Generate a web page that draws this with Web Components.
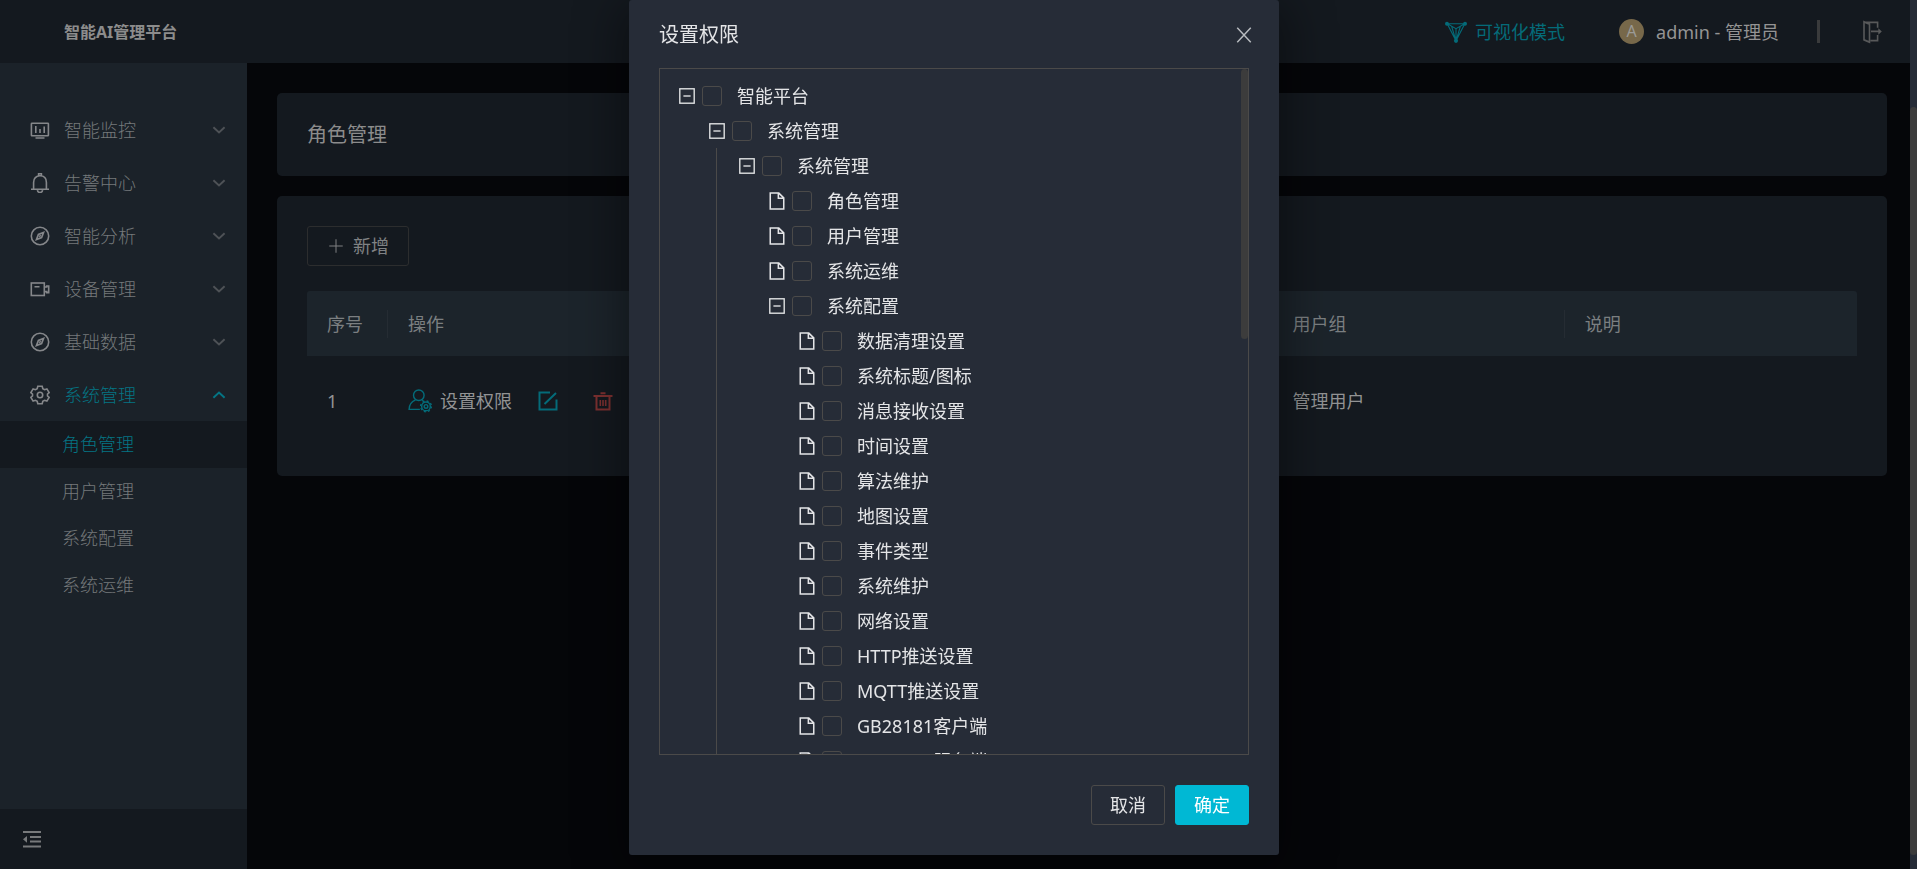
<!DOCTYPE html>
<html lang="zh-CN">
<head>
<meta charset="utf-8">
<title>智能AI管理平台</title>
<style>
    html, body { height: 100%; margin: 0; }
    body {
        background: #050609;
        color: #8a8c8e;
        font: 18px/26px "Noto Sans", "Noto Sans CJK SC", sans-serif;
        overflow: hidden;
    }
</style>
</head>
<body>
<app-shell>
    <app-header slot="header" name="智能AI管理平台" user="admin - 管理员"></app-header>
    <side-nav slot="nav">
        <nav-item icon="monitor">智能监控</nav-item>
        <nav-item icon="bell">告警中心</nav-item>
        <nav-item icon="compass">智能分析</nav-item>
        <nav-item icon="camera">设备管理</nav-item>
        <nav-item icon="compass">基础数据</nav-item>
        <nav-item icon="gear" open>系统管理
            <sub-item slot="sub" active>角色管理</sub-item>
            <sub-item slot="sub">用户管理</sub-item>
            <sub-item slot="sub">系统配置</sub-item>
            <sub-item slot="sub">系统运维</sub-item>
        </nav-item>
    </side-nav>
    <page-card><page-title>角色管理</page-title></page-card>
    <page-card>
        <ui-button icon="plus">新增</ui-button>
        <role-table></role-table>
    </page-card>
</app-shell>
<perm-modal heading="设置权限">
    <perm-tree></perm-tree>
    <ui-button slot="footer" variant="dialog">取消</ui-button>
    <ui-button slot="footer" variant="primary">确定</ui-button>
</perm-modal>

<script>
const ICONS = {
    monitor: '<rect x="1.4" y="3.2" width="17" height="12.6" rx=".6"/><path d="M5.8 6v7M10 9v4M14.2 6.500v6.500M5.500 18h9"/>',
    bell: '<path d="M1 16.200h18M3.600 16V9.500C3.600 5.500 6 2.800 10 2.800s6.400 2.700 6.400 6.700V16M8.600 2.500V.8h2.800v1.700M7.400 17.200c.3 3 4.900 3 5.200 0"/>',
    compass: '<circle cx="10" cy="10" r="8.700"/><path d="M13.600 6.400l-2 5.200-5.200 2 2-5.200z M9.200 10.800l1.600-1.600"/>',
    camera: '<rect x="1.300" y="4" width="13" height="12.500"/><path d="M4.500 7.800h5M14.500 8h2.200v-1h2v6.600h-2v-1h-2.200"/>',
    gear: '<path d="M7.800 1.200h4.400l.6 2.500 1.700 1 2.400-.8 2.200 3.700-1.600 1.400v2l1.600 1.400-2.200 3.700-2.400-.8-1.700 1-.6 2.500H7.800l-.6-2.500-1.700-1-2.400.8L.9 12.400 2.500 11V9L.9 7.600l2.200-3.700 2.400.8 1.700-1z"/><circle cx="10" cy="10" r="2.700"/>',
    down: '<path d="M3 6.500l7 6.500 7-6.500"/>',
    up: '<path d="M3 13.500L10 7l7 6.500"/>',
    fold: '<path d="M1 3h18M8 8h11M8 12.600h11M1 17.500h18" stroke-width="2"/><path d="M1 10.300l4-3.400v6.800z" fill="currentColor" stroke="none"/>',
    visual: '<path d="M2 2.500h16L10 18zM2 2.500l8 4.500 8-4.500M10 7v11M6 4.800L10 18l4-13.200"/><g fill="currentColor" stroke="none"><circle cx="1.800" cy="2.500" r="1.800"/><circle cx="18.200" cy="2.500" r="1.800"/><circle cx="10" cy="18" r="1.900"/></g>',
    logout: '<path d="M8 2h7.600v4.500M15.600 12.500v4.700H8.500M2 1.500l5.500 2v15l-5.500-2zM2 2h7M9 9.500h9"/><path d="M16.300 6.800l3.500 2.700-3.500 2.700z" fill="currentColor" stroke="none"/>',
    plus: '<path d="M10 2.500v15M2.500 10h15"/>',
    rights: '<circle cx="9" cy="5.200" r="4.400"/><path d="M6.300 9C2.800 10.500.9 13.500.9 17h9M11.700 9l1.200.8"/><circle cx="15" cy="14.500" r="1.500"/><circle cx="15" cy="14.500" r="3.600"/><circle cx="15" cy="14.500" r="4.500" stroke-dasharray="1.700 1.830"/>',
    edit: '<path d="M12 1.500H1.500v17h17V8.500M6.500 13L18 2" stroke-width="2"/>',
    trash: '<path d="M.5 5h19M7.500 2.200h5M3.500 5v13.500h13V5" stroke-width="2"/><path d="M7.300 9v6M10 9v6M12.700 9v6"/>',
    close: '<path d="M2.500 2l15 16M17.500 2l-15 16"/>',
    minus: '<rect x="1" y="1" width="18" height="18"/><path d="M5.500 10h9"/>',
    file: '<path d="M2.500 1.200h9.500l5.500 5.300V18.800h-15zM11.500 1.500V7h6"/>'
};

function define(name, html, setup) {
    customElements.define(name, class extends HTMLElement {
        constructor() {
            super();
            this.attachShadow({ mode: 'open' });
        }

        connectedCallback() {
            this.shadowRoot.innerHTML = typeof html === 'function' ? html(this) : html;
            if (setup) setup(this, this.shadowRoot);
        }
    });
}

define('ui-icon', el => `
    <style>
        :host { display: block; width: 20px; height: 20px; flex: none; }
        svg { display: block; width: 100%; height: 100%; fill: none; stroke: currentColor; stroke-width: var(--stroke, 1.6); }
    </style>
    <svg viewBox="0 0 20 20" preserveAspectRatio="none" aria-hidden="true">${ICONS[el.getAttribute('name')]}</svg>
`);

define('app-shell', `
    <style>
        :host { display: grid; grid-template: 63px 1fr / 247px 1fr; height: 100vh; }
        header { grid-column: 1 / 3; background: #14191f; }
        aside { background: #1b2229; }
        main { display: flex; flex-direction: column; gap: 20px; padding: 30px; }
    </style>
    <header><slot name="header"></slot></header>
    <aside><slot name="nav"></slot></aside>
    <main><slot></slot></main>
`);

define('app-header', el => `
    <style>
        :host { display: block; height: 100%; }
        .bar { display: flex; align-items: center; justify-content: space-between; height: 100%; padding: 0 35px 0 64px; }
        h1 { margin: 0; font-size: 16px; font-weight: 700; color: #8c8c8c; }
        .tools, a, .user { display: flex; align-items: center; }
        a { gap: 8px; color: #046b79; text-decoration: none; margin-right: 54px; }
        a ui-icon { width: 22px; height: 22px; --stroke: 1; }
        .user { gap: 12px; color: #949494; }
        .avatar { width: 25px; height: 25px; border-radius: 50%; background: #77684a; color: #9b9a96; font-size: 16px; line-height: 25px; text-align: center; }
        .line { width: 3px; height: 23px; margin: 0 42px 0 38px; background: #3a3b3c; }
        button { border: 0; padding: 0; background: none; color: #58595a; }
        button ui-icon { height: 24px; }
    </style>
    <div class="bar">
        <h1>${el.getAttribute('name')}</h1>
        <div class="tools">
            <a href="#visual"><ui-icon name="visual"></ui-icon>可视化模式</a>
            <div class="user"><span class="avatar">A</span><span>${el.getAttribute('user')}</span></div>
            <span class="line"></span>
            <button aria-label="退出"><ui-icon name="logout"></ui-icon></button>
        </div>
    </div>
`);

define('side-nav', `
    <style>
        :host { display: flex; flex-direction: column; height: 100%; }
        nav { flex: 1; padding-top: 40px; }
        footer { display: flex; align-items: center; height: 60px; padding-left: 22px; background: #14191f; }
        button { border: 0; padding: 0; background: none; color: #77797b; }
    </style>
    <nav><slot></slot></nav>
    <footer><button aria-label="收起菜单"><ui-icon name="fold"></ui-icon></button></footer>
`);

define('nav-item', el => `
    <style>
        :host { display: block; color: #75797b; font-weight: 300; }
        button {
            display: flex; align-items: center; width: 100%; height: 53px; padding: 0 20px 0 30px;
            border: 0; background: none; color: inherit; font: inherit; text-align: left;
        }
        :host([open]) button { color: #047584; }
        .icon { color: #85878a; margin-right: 14px; }
        .text { flex: 1; }
        .arrow { width: 16px; height: 16px; --stroke: 2.4; }
        :host(:not([open])) .arrow { color: #4e5256; }
    </style>
    <button aria-expanded="${el.hasAttribute('open')}">
        <ui-icon class="icon" name="${el.getAttribute('icon')}"></ui-icon>
        <span class="text"><slot></slot></span>
        <ui-icon class="arrow" name="${el.hasAttribute('open') ? 'up' : 'down'}"></ui-icon>
    </button>
    <slot name="sub"></slot>
`);

define('sub-item', `
    <style>
        :host { display: block; }
        a { display: block; padding-left: 62px; line-height: 47px; color: #75797b; text-decoration: none; }
        :host([active]) a { background: #14191f; color: #047584; }
    </style>
    <a href="#"><slot></slot></a>
`);

define('page-card', `
    <style>
        :host { display: block; padding: 30px; border-radius: 5px; background: #14191f; }
    </style>
    <slot></slot>
`);

define('page-title', `
    <style>
        :host { display: block; }
        h2 { margin: 0; font-size: 20px; line-height: 23px; font-weight: 400; color: #8c8c8c; }
    </style>
    <h2><slot></slot></h2>
`);

define('ui-button', el => `
    <style>
        :host { display: block; }
        button {
            display: flex; align-items: center; gap: 8px; height: 40px; padding: 0 19px;
            border: 1px solid #2c2d2e; border-radius: 3px; background: none; color: #808284; font: inherit;
        }
        ui-icon { width: 18px; height: 18px; --stroke: 1.1; }
        :host([variant]) button { padding: 0 18px; border-color: #4b4a49; color: #e4e5e7; }
        :host([variant="primary"]) button { border-color: #00b8d4; background: #00b8d4; color: #fff; }
    </style>
    <button>${el.hasAttribute('icon') ? `<ui-icon name="${el.getAttribute('icon')}"></ui-icon>` : ''}<slot></slot></button>
`);

define('role-table', `
    <style>
        :host { display: block; margin-top: 25px; }
        table { width: 100%; table-layout: fixed; border-collapse: separate; border-spacing: 0; }
        .index { width: 81px; }
        .action { width: 300px; }
        th, td { padding: 0 20px; text-align: left; font-weight: 400; box-sizing: border-box; }
        th { height: 65px; color: #7b7f81; background: #1c242b; }
        th:not(:last-child) { background: linear-gradient(#252c33, #252c33) right center / 1px 28px no-repeat #1c242b; }
        th:first-child { border-top-left-radius: 3px; }
        th:last-child { border-top-right-radius: 3px; }
        td { height: 90px; color: #929394; }
        .tools { display: flex; align-items: center; gap: 26px; }
        button { display: flex; align-items: center; gap: 8px; padding: 0; border: 0; background: none; color: inherit; font: inherit; }
        .rights ui-icon { width: 24px; height: 24px; --stroke: 1.2; }
        .rights ui-icon, .edit { color: #046b79; }
        .edit { padding-right: 9px; }
        .delete { color: #7d3030; }
    </style>
    <table>
        <colgroup><col class="index"><col class="action"><col><col><col><col></colgroup>
        <thead>
            <tr><th>序号</th><th>操作</th><th></th><th></th><th>用户组</th><th>说明</th></tr>
        </thead>
        <tbody>
            <tr>
                <td>1</td>
                <td>
                    <div class="tools">
                        <button class="rights"><ui-icon name="rights"></ui-icon>设置权限</button>
                        <button class="edit" aria-label="编辑"><ui-icon name="edit"></ui-icon></button>
                        <button class="delete" aria-label="删除"><ui-icon name="trash"></ui-icon></button>
                    </div>
                </td>
                <td></td><td></td><td>管理用户</td><td></td>
            </tr>
        </tbody>
    </table>
`);

define('perm-modal', el => `
    <style>
        :host {
            position: fixed; inset: 0; display: flex; justify-content: center; align-items: flex-start;
            padding-right: 9px; overflow: hidden;
        }
        .dialog {
            width: 650px; box-sizing: border-box; padding: 0 30px 30px; border-radius: 3px;
            background: #262c37; color: #e4e5e7; box-shadow: 0 12px 48px 8px rgba(0, 0, 0, .4);
        }
        header { display: flex; align-items: center; justify-content: space-between; height: 66px; padding: 2px 0 0; }
        h2 { margin: 0; font-size: 20px; font-weight: 400; }
        header button { border: 0; padding: 0; margin-right: -4px; background: none; color: #b9bcc0; }
        header ui-icon { width: 18px; height: 18px; --stroke: 1.6; }
        footer { display: flex; justify-content: flex-end; gap: 10px; padding-top: 30px; }
        .track { position: absolute; top: 0; right: 0; bottom: 0; width: 7px; background: #262c37; }
        .thumb { position: absolute; top: 107px; bottom: 14px; width: 7px; border-radius: 4px; background: #3c3c3c; }
    </style>
    <section class="dialog" role="dialog" aria-labelledby="heading">
        <header>
            <h2 id="heading">${el.getAttribute('heading')}</h2>
            <button aria-label="关闭"><ui-icon name="close"></ui-icon></button>
        </header>
        <slot></slot>
        <footer><slot name="footer"></slot></footer>
    </section>
    <div class="track"><div class="thumb"></div></div>
`);

define('tree-node', el => `
    <style>
        :host { display: block; }
        .row { display: flex; align-items: center; height: 35px; }
        .switch { width: 16px; padding: 0; margin-right: 7px; border: 0; background: none; color: inherit; --stroke: 1.7; }
        .switch ui-icon { width: 16px; height: 16px; }
        .switch ui-icon[name="file"] { width: 18px; height: 18px; margin-left: -1px; }
        label { display: flex; align-items: center; gap: 15px; white-space: nowrap; }
        input { appearance: none; width: 20px; height: 20px; margin: 0; border: 1px solid #4b4a49; border-radius: 3px; }
        .children { padding-left: 30px; }
        :host([line]) .children { margin-left: 7px; padding-left: 22px; border-left: 1px solid #4b4a49; }
    </style>
    <div class="row">
        ${el.children.length
            ? '<button class="switch" aria-label="收起"><ui-icon name="minus"></ui-icon></button>'
            : '<span class="switch"><ui-icon name="file"></ui-icon></span>'}
        <label><input type="checkbox"><span>${el.getAttribute('label')}</span></label>
    </div>
    <div class="children"><slot></slot></div>
`);

const RIGHTS = {
    label: '智能平台',
    children: [{
        label: '系统管理',
        line: true,
        children: [{
            label: '系统管理',
            children: ['角色管理', '用户管理', '系统运维', {
                label: '系统配置',
                children: [
                    '数据清理设置', '系统标题/图标', '消息接收设置', '时间设置', '算法维护', '地图设置', '事件类型',
                    '系统维护', '网络设置', 'HTTP推送设置', 'MQTT推送设置', 'GB28181客户端', 'GB28181服务端'
                ]
            }]
        }]
    }]
};

function buildNode(item) {
    const node = document.createElement('tree-node');
    node.setAttribute('label', item.label || item);
    if (item.line) node.setAttribute('line', '');
    (item.children || []).forEach(child => node.appendChild(buildNode(child)));
    return node;
}

define('perm-tree', `
    <style>
        :host {
            display: block; position: relative; box-sizing: border-box; height: calc(100vh - 182px);
            padding: 9px 19px; border: 1px solid #4b4a49; overflow: hidden;
        }
        .thumb { position: absolute; top: 0; right: 0; width: 7px; height: 270px; border-radius: 4px; background: #3c3c3c; }
    </style>
    <div class="root"></div>
    <div class="thumb"></div>
`, (el, root) => root.querySelector('.root').appendChild(buildNode(RIGHTS)));
</script>
</body>
</html>
